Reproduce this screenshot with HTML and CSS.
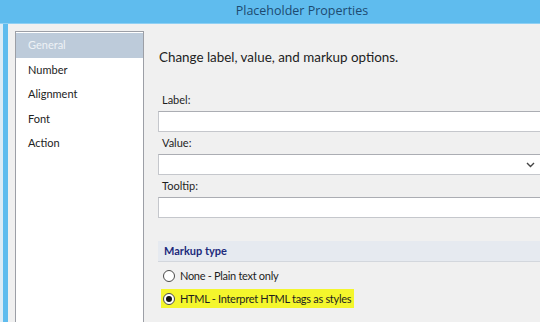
FILE: index.html
```html
<html>
<head>
  <meta name="viewport" content="width=device-width, initial-scale=1">
  <title>Placeholder Properties</title>
  <link rel="stylesheet" href="styles.css">
</head>
<body>
  <div class="titlebar">Placeholder Properties</div>
  <div class="client">
    <div class="edge"></div>
    <div class="dialog">
      <ul class="nav">
        <li class="selected">General</li>
        <li>Number</li>
        <li>Alignment</li>
        <li>Font</li>
        <li>Action</li>
      </ul>

      <div class="content">
        <h1 class="heading">Change label, value, and markup options.</h1>

        <label class="field-label" for="label">Label:</label>
        <input class="field" id="label" type="text">

        <label class="field-label" for="value">Value:</label>
        <div class="field select" id="value">
          <svg class="chevron" width="9" height="6" viewBox="0 0 9 6">
            <path d="M1 1 L4.5 4.5 L8 1" fill="none" stroke="#444" stroke-width="1.4"/>
          </svg>
        </div>

        <label class="field-label" for="tooltip">Tooltip:</label>
        <input class="field" id="tooltip" type="text">

        <div class="section">Markup type</div>

        <div class="radio-row">
          <span class="radio"></span>
          <span>None - Plain text only</span>
        </div>
        <div class="radio-row highlight">
          <span class="radio checked"></span>
          <span>HTML - Interpret HTML tags as styles</span>
        </div>
      </div>
    </div>
  </div>
</body>
</html>
```

FILE: styles.css
```css
body {
  margin: 0;
  height: 322px;
  overflow: hidden;
  background-color: #5fbcee;
  font-family: "Lato", "Open Sans", sans-serif;
  font-size: 11px;
  color: #1e1e1e;
  display: flex;
  flex-direction: column;
}

.titlebar {
  height: 23px;
  line-height: 22px;
  text-align: center;
  font-family: "Open Sans", sans-serif;
  font-size: 12.5px;
  color: #1d4a70;
  padding-left: 64px;
  border-bottom: 1px solid #8fd0f4;
  flex-shrink: 0;
}

.client {
  flex: 1;
  display: flex;
}

/* borde de la ventana */
.edge {
  width: 5px;
  border-left: 3px solid #dcecf6;
  background-color: #5fbcee;
  flex-shrink: 0;
}

.dialog {
  flex: 1;
  display: flex;
  background-color: #f0f0f0;
  padding: 7px 0 0 7px;
}

/* lista de paginas */
.nav {
  list-style: none;
  margin: 0;
  padding: 1px 0 0;
  width: 127px;
  background-color: #fff;
  border: 1px solid #9c9fa6;
  border-bottom: none;
  flex-shrink: 0;
}

.nav li {
  height: 24.5px;
  line-height: 24.5px;
  padding-left: 12px;
  font-size: 11px;
  color: #222;
}

.nav li.selected {
  background-color: #bdcbda;
  color: #eef2f6;
}

/* panel derecho */
.content {
  margin-left: 14px;
  width: 385px;
  flex-shrink: 0;
}

.heading {
  margin: 16px 0 0 1px;
  font-size: 13.4px;
  font-weight: normal;
  line-height: 20px;
  color: #222;
}

.field-label {
  display: block;
  margin: 25px 0 3px 4px;
  line-height: 16px;
}

.field + .field-label {
  margin-top: 3px;
}

.field {
  display: block;
  box-sizing: border-box;
  width: 100%;
  height: 21px;
  margin: 0;
  background-color: #fff;
  border: 1px solid #c5c7cc;
  border-top-color: #abadb3;
  font: inherit;
}

.select {
  position: relative;
}

.chevron {
  position: absolute;
  right: 7px;
  top: 7px;
}

.section {
  margin-top: 23px;
  height: 20px;
  line-height: 20px;
  padding-left: 6px;
  font-weight: bold;
  color: #1c2b7c;
  background-color: #e6eaf0;
  border-bottom: 1px solid #d3d7dd;
}

.radio-row {
  display: flex;
  align-items: center;
  gap: 5px;
  height: 19px;
  margin: 4px 0 0 3px;
  padding: 0 3px 0 2px;
  width: max-content;
  letter-spacing: -0.3px;
}

.radio-row + .radio-row {
  margin-top: 4px;
}

.highlight {
  background-color: #f4f62c;
}

.radio {
  box-sizing: border-box;
  width: 12px;
  height: 12px;
  border-radius: 50%;
  border: 1px solid #4a4a4a;
  background-color: #fff;
  display: flex;
  align-items: center;
  justify-content: center;
}

.radio.checked::after {
  content: "";
  width: 6px;
  height: 6px;
  border-radius: 50%;
  background-color: #111;
}
```
